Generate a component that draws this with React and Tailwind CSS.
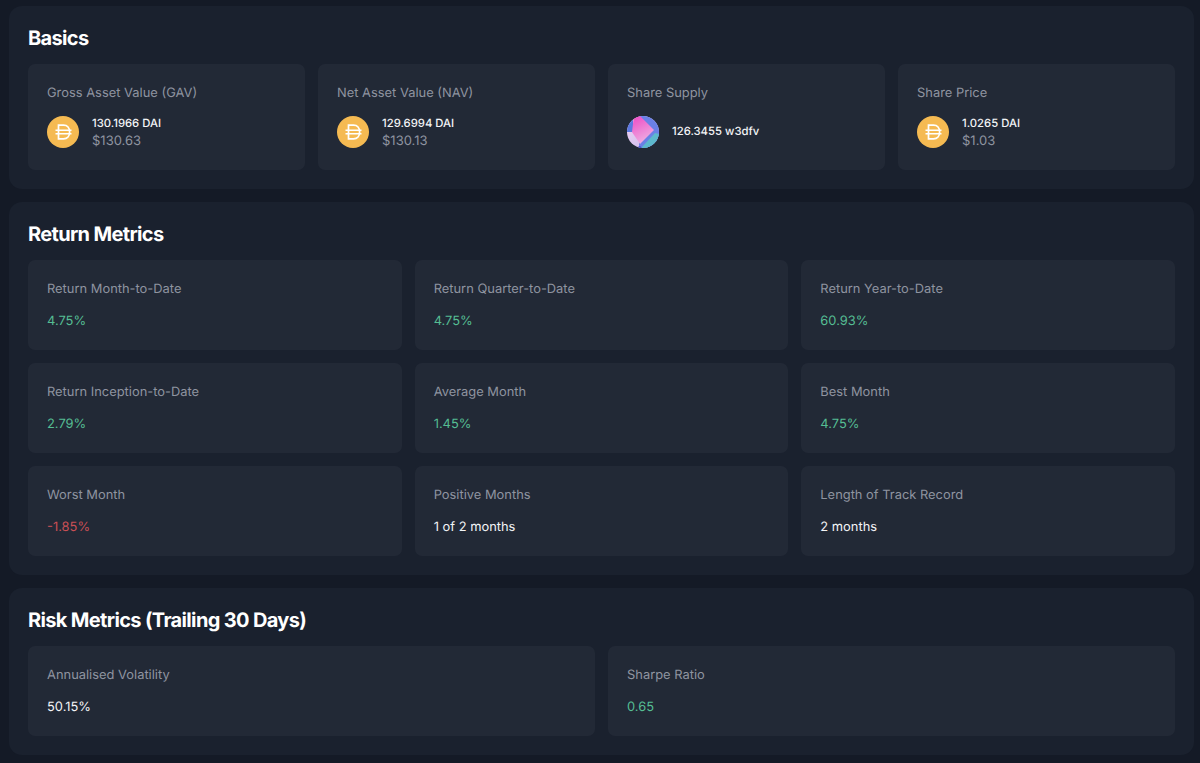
import React from 'react';

const DaiIcon = () => (
  <svg viewBox="0 0 32 32" className="w-[32px] h-[32px] shrink-0">
    <circle cx="16" cy="16" r="16" fill="#F5BA52" />
    <path
      d="M11.500 9.200h5c3.900 0 6.100 2.900 6.100 6.800s-2.200 6.800-6.100 6.800h-5z"
      fill="none"
      stroke="#fff"
      strokeWidth="1.700"
    />
    <path d="M8.500 14.300h16M8.500 17.700h16" stroke="#fff" strokeWidth="1.500" />
  </svg>
);

const FundIcon = () => (
  <svg viewBox="0 0 32 32" className="w-[32px] h-[32px] shrink-0">
    <defs>
      <linearGradient id="fundBase" x1="0" y1="0" x2="1" y2="1">
        <stop offset="0" stopColor="#f0d4f4" />
        <stop offset="1" stopColor="#c9b6ea" />
      </linearGradient>
      <linearGradient id="fundPink" x1="0.2" y1="0" x2="0.6" y2="1">
        <stop offset="0" stopColor="#ee4fc6" />
        <stop offset="1" stopColor="#eeb4e4" />
      </linearGradient>
      <clipPath id="fundClip">
        <circle cx="16" cy="16" r="16" />
      </clipPath>
    </defs>
    <g clipPath="url(#fundClip)">
      <rect width="32" height="32" fill="url(#fundBase)" />
      <path d="M12 0h20v32H12z" fill="#6a80e6" />
      <path d="M0 6l6-4v14H0z" fill="#5b78e0" />
      <path d="M14 32l14-15 4 1v14z" fill="#5cb8cc" />
      <path d="M8 32l5-2 2 2z" fill="#4a4fc8" />
      <path d="M7 0h6l14 14-14 14L5 16z" fill="url(#fundPink)" />
    </g>
  </svg>
);

const basics = [
  { label: 'Gross Asset Value (GAV)', amount: '130.1966 DAI', usd: '$130.63', icon: DaiIcon },
  { label: 'Net Asset Value (NAV)', amount: '129.6994 DAI', usd: '$130.13', icon: DaiIcon },
  { label: 'Share Supply', amount: '126.3455 w3dfv', icon: FundIcon },
  { label: 'Share Price', amount: '1.0265 DAI', usd: '$1.03', icon: DaiIcon },
];

const returnMetrics = [
  { label: 'Return Month-to-Date', value: '4.75%', tone: 'up' },
  { label: 'Return Quarter-to-Date', value: '4.75%', tone: 'up' },
  { label: 'Return Year-to-Date', value: '60.93%', tone: 'up' },
  { label: 'Return Inception-to-Date', value: '2.79%', tone: 'up' },
  { label: 'Average Month', value: '1.45%', tone: 'up' },
  { label: 'Best Month', value: '4.75%', tone: 'up' },
  { label: 'Worst Month', value: '-1.85%', tone: 'down' },
  { label: 'Positive Months', value: '1 of 2 months' },
  { label: 'Length of Track Record', value: '2 months' },
];

const riskMetrics = [
  { label: 'Annualised Volatility', value: '50.15%' },
  { label: 'Sharpe Ratio', value: '0.65', tone: 'up' },
];

const getToneColor = (tone) => {
  switch (tone) {
    case 'up': return 'text-[#55bd93]';
    case 'down': return 'text-[#c94f55]';
    default: return 'text-[#f3f4f6]';
  }
};

const Section = ({ title, children }) => (
  <section className="bg-[#1a212e] rounded-[13px] p-[19px]">
    <h2 className="text-[20px] leading-[26px] font-bold tracking-[-0.65px] text-white mb-[13px]">{title}</h2>
    {children}
  </section>
);

const MetricCard = ({ label, value, tone }) => (
  <div className="bg-[#222936] rounded-[7px] px-[19px] h-[90px] pt-[20px]">
    <p className="text-[12.9px] leading-[19px] text-[#8f94a0]">{label}</p>
    <p className={`text-[12.9px] leading-[19px] mt-[13px] ${getToneColor(tone)}`}>{value}</p>
  </div>
);

const AssetCard = ({ label, amount, usd, icon: Icon }) => (
  <div className="bg-[#222936] rounded-[7px] px-[19px] h-[105.75px] pt-[20px]">
    <p className="text-[12.9px] leading-[19px] text-[#8f94a0]">{label}</p>
    <div className="flex items-center gap-[13px] mt-[10px] h-[38px]">
      <Icon />
      <div className={usd ? 'pt-[2px]' : 'pb-[1px]'}>
        <p className="text-[11.3px] leading-[17px] font-medium text-[#f3f4f6]">{amount}</p>
        {usd && <p className="text-[13px] leading-[19px] text-[#8f94a0]">{usd}</p>}
      </div>
    </div>
  </div>
);

export default function App() {
  return (
    <div className="min-h-[763px] bg-[#141a26] pl-[9px] pr-[6px] pt-[6px] pb-[7px] flex flex-col gap-[13.25px] font-['Inter',sans-serif] [text-rendering:geometricPrecision] overflow-hidden">
      <Section title="Basics">
        <div className="grid grid-cols-4 gap-[13px]">
          {basics.map((item) => (
            <AssetCard key={item.label} {...item} />
          ))}
        </div>
      </Section>
      <Section title="Return Metrics">
        <div className="grid grid-cols-3 gap-[13px]">
          {returnMetrics.map((item) => (
            <MetricCard key={item.label} {...item} />
          ))}
        </div>
      </Section>
      <Section title="Risk Metrics (Trailing 30 Days)">
        <div className="grid grid-cols-2 gap-[13px]">
          {riskMetrics.map((item) => (
            <MetricCard key={item.label} {...item} />
          ))}
        </div>
      </Section>
    </div>
  );
}
